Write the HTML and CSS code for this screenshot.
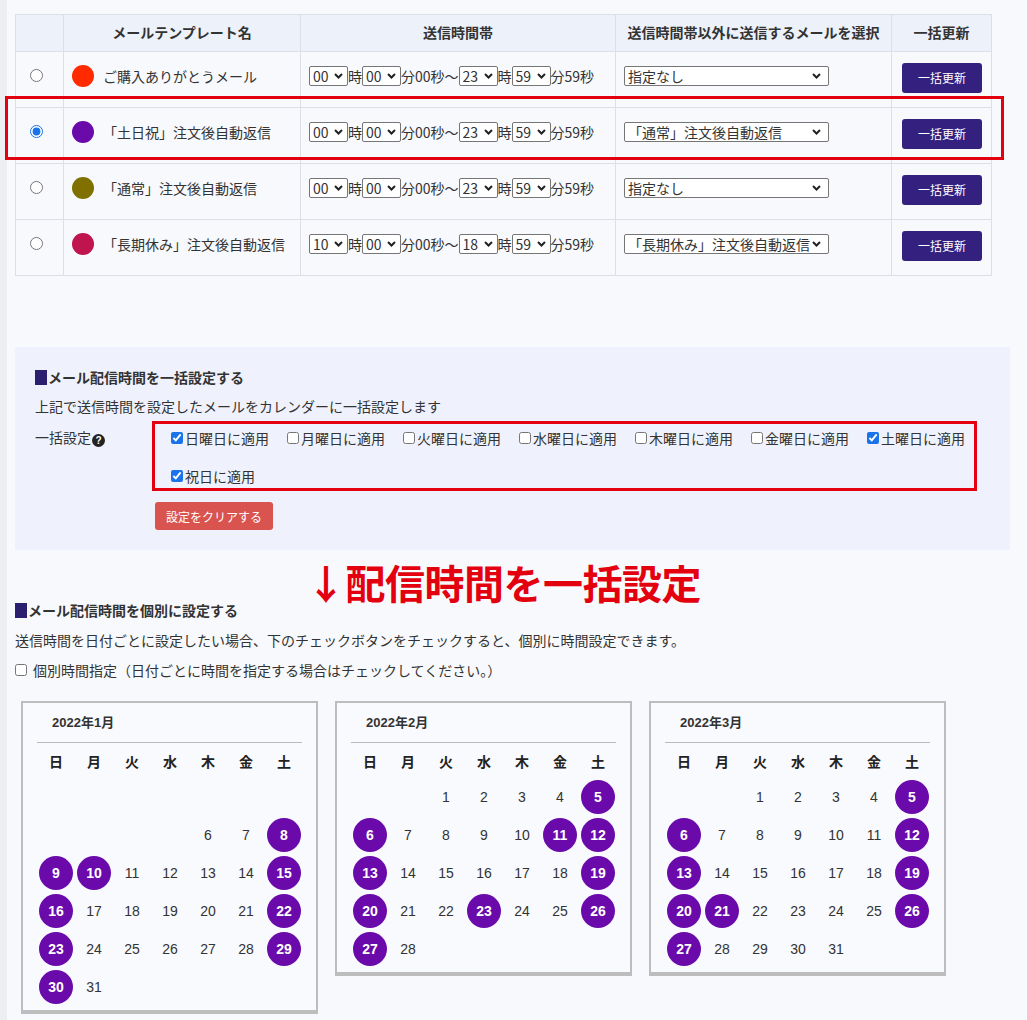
FILE: index.html
```html
<!DOCTYPE html>
<html lang="ja">
<head>
<meta charset="utf-8">
<title>メール配信時間設定</title>
<link rel="stylesheet" href="styles.css">
</head>
<body>
<div class="page">
  <div class="tbl-wrap">
    <table class="tpl">
      <thead>
        <tr>
          <th class="c-radio"></th>
          <th class="c-name">メールテンプレート名</th>
          <th class="c-time">送信時間帯</th>
          <th class="c-other">送信時間帯以外に送信するメールを選択</th>
          <th class="c-btn">一括更新</th>
        </tr>
      </thead>
      <tbody>
        <tr>
          <td class="c-radio"><input type="radio" name="tpl"></td>
          <td class="c-name"><div class="name"><span class="dot dot-red"></span>ご購入ありがとうメール</div></td>
          <td class="c-time"><div class="time">
            <span class="sel sm"><select><option>00</option></select><svg viewBox="0 0 9 6"><polyline points="1,1 4.5,4.5 8,1"/></svg></span>時<span class="sel sm"><select><option>00</option></select><svg viewBox="0 0 9 6"><polyline points="1,1 4.5,4.5 8,1"/></svg></span>分00秒〜<span class="sel sm"><select><option>23</option></select><svg viewBox="0 0 9 6"><polyline points="1,1 4.5,4.5 8,1"/></svg></span>時<span class="sel sm"><select><option>59</option></select><svg viewBox="0 0 9 6"><polyline points="1,1 4.5,4.5 8,1"/></svg></span>分59秒
          </div></td>
          <td class="c-other"><span class="sel lg"><select><option>指定なし</option></select><svg viewBox="0 0 9 6"><polyline points="1,1 4.5,4.5 8,1"/></svg></span></td>
          <td class="c-btn"><button class="btn-update">一括更新</button></td>
        </tr>
        <tr>
          <td class="c-radio"><input type="radio" name="tpl" checked></td>
          <td class="c-name"><div class="name"><span class="dot dot-purple"></span>「土日祝」注文後自動返信</div></td>
          <td class="c-time"><div class="time">
            <span class="sel sm"><select><option>00</option></select><svg viewBox="0 0 9 6"><polyline points="1,1 4.5,4.5 8,1"/></svg></span>時<span class="sel sm"><select><option>00</option></select><svg viewBox="0 0 9 6"><polyline points="1,1 4.5,4.5 8,1"/></svg></span>分00秒〜<span class="sel sm"><select><option>23</option></select><svg viewBox="0 0 9 6"><polyline points="1,1 4.5,4.5 8,1"/></svg></span>時<span class="sel sm"><select><option>59</option></select><svg viewBox="0 0 9 6"><polyline points="1,1 4.5,4.5 8,1"/></svg></span>分59秒
          </div></td>
          <td class="c-other"><span class="sel lg"><select><option>「通常」注文後自動返信</option></select><svg viewBox="0 0 9 6"><polyline points="1,1 4.5,4.5 8,1"/></svg></span></td>
          <td class="c-btn"><button class="btn-update">一括更新</button></td>
        </tr>
        <tr>
          <td class="c-radio"><input type="radio" name="tpl"></td>
          <td class="c-name"><div class="name"><span class="dot dot-olive"></span>「通常」注文後自動返信</div></td>
          <td class="c-time"><div class="time">
            <span class="sel sm"><select><option>00</option></select><svg viewBox="0 0 9 6"><polyline points="1,1 4.5,4.5 8,1"/></svg></span>時<span class="sel sm"><select><option>00</option></select><svg viewBox="0 0 9 6"><polyline points="1,1 4.5,4.5 8,1"/></svg></span>分00秒〜<span class="sel sm"><select><option>23</option></select><svg viewBox="0 0 9 6"><polyline points="1,1 4.5,4.5 8,1"/></svg></span>時<span class="sel sm"><select><option>59</option></select><svg viewBox="0 0 9 6"><polyline points="1,1 4.5,4.5 8,1"/></svg></span>分59秒
          </div></td>
          <td class="c-other"><span class="sel lg"><select><option>指定なし</option></select><svg viewBox="0 0 9 6"><polyline points="1,1 4.5,4.5 8,1"/></svg></span></td>
          <td class="c-btn"><button class="btn-update">一括更新</button></td>
        </tr>
        <tr>
          <td class="c-radio"><input type="radio" name="tpl"></td>
          <td class="c-name"><div class="name"><span class="dot dot-crimson"></span>「長期休み」注文後自動返信</div></td>
          <td class="c-time"><div class="time">
            <span class="sel sm"><select><option>10</option></select><svg viewBox="0 0 9 6"><polyline points="1,1 4.5,4.5 8,1"/></svg></span>時<span class="sel sm"><select><option>00</option></select><svg viewBox="0 0 9 6"><polyline points="1,1 4.5,4.5 8,1"/></svg></span>分00秒〜<span class="sel sm"><select><option>18</option></select><svg viewBox="0 0 9 6"><polyline points="1,1 4.5,4.5 8,1"/></svg></span>時<span class="sel sm"><select><option>59</option></select><svg viewBox="0 0 9 6"><polyline points="1,1 4.5,4.5 8,1"/></svg></span>分59秒
          </div></td>
          <td class="c-other"><span class="sel lg"><select><option>「長期休み」注文後自動返信</option></select><svg viewBox="0 0 9 6"><polyline points="1,1 4.5,4.5 8,1"/></svg></span></td>
          <td class="c-btn"><button class="btn-update">一括更新</button></td>
        </tr>
      </tbody>
    </table>
    <div class="row-mark"></div>
  </div>

  <section class="bulk">
    <h3 class="sec-title">メール配信時間を一括設定する</h3>
    <p class="desc">上記で送信時間を設定したメールをカレンダーに一括設定します</p>
    <div class="bulk-row">
      <div class="bulk-label">一括設定<span class="help">?</span></div>
      <div class="bulk-body">
        <div class="days">
          <label class="day"><input type="checkbox" checked>日曜日に適用</label>
          <label class="day"><input type="checkbox">月曜日に適用</label>
          <label class="day"><input type="checkbox">火曜日に適用</label>
          <label class="day"><input type="checkbox">水曜日に適用</label>
          <label class="day"><input type="checkbox">木曜日に適用</label>
          <label class="day"><input type="checkbox">金曜日に適用</label>
          <label class="day"><input type="checkbox" checked>土曜日に適用</label>
          <label class="day"><input type="checkbox" checked>祝日に適用</label>
        </div>
      </div>
    </div>
    <button class="btn-clear">設定をクリアする</button>
  </section>

  <div class="note">↓配信時間を一括設定</div>

  <section class="indiv">
    <h3 class="sec-title plain">メール配信時間を個別に設定する</h3>
    <p class="desc2">送信時間を日付ごとに設定したい場合、下のチェックボタンをチェックすると、個別に時間設定できます。</p>
    <label class="indiv-check"><input type="checkbox">個別時間指定（日付ごとに時間を指定する場合はチェックしてください。）</label>

    <div class="cals">
      <div class="cal">
        <div class="cal-title">2022年1月</div>
        <div class="grid">
          <span class="wd">日</span><span class="wd">月</span><span class="wd">火</span><span class="wd">水</span><span class="wd">木</span><span class="wd">金</span><span class="wd">土</span>
          <span></span><span></span><span></span><span></span><span></span><span></span><span></span>
          <span></span><span></span><span></span><span></span><span>6</span><span>7</span><span class="on">8</span>
          <span class="on">9</span><span class="on">10</span><span>11</span><span>12</span><span>13</span><span>14</span><span class="on">15</span>
          <span class="on">16</span><span>17</span><span>18</span><span>19</span><span>20</span><span>21</span><span class="on">22</span>
          <span class="on">23</span><span>24</span><span>25</span><span>26</span><span>27</span><span>28</span><span class="on">29</span>
          <span class="on">30</span><span>31</span>
        </div>
      </div>
      <div class="cal">
        <div class="cal-title">2022年2月</div>
        <div class="grid">
          <span class="wd">日</span><span class="wd">月</span><span class="wd">火</span><span class="wd">水</span><span class="wd">木</span><span class="wd">金</span><span class="wd">土</span>
          <span></span><span></span><span>1</span><span>2</span><span>3</span><span>4</span><span class="on">5</span>
          <span class="on">6</span><span>7</span><span>8</span><span>9</span><span>10</span><span class="on">11</span><span class="on">12</span>
          <span class="on">13</span><span>14</span><span>15</span><span>16</span><span>17</span><span>18</span><span class="on">19</span>
          <span class="on">20</span><span>21</span><span>22</span><span class="on">23</span><span>24</span><span>25</span><span class="on">26</span>
          <span class="on">27</span><span>28</span>
        </div>
      </div>
      <div class="cal">
        <div class="cal-title">2022年3月</div>
        <div class="grid">
          <span class="wd">日</span><span class="wd">月</span><span class="wd">火</span><span class="wd">水</span><span class="wd">木</span><span class="wd">金</span><span class="wd">土</span>
          <span></span><span></span><span>1</span><span>2</span><span>3</span><span>4</span><span class="on">5</span>
          <span class="on">6</span><span>7</span><span>8</span><span>9</span><span>10</span><span>11</span><span class="on">12</span>
          <span class="on">13</span><span>14</span><span>15</span><span>16</span><span>17</span><span>18</span><span class="on">19</span>
          <span class="on">20</span><span class="on">21</span><span>22</span><span>23</span><span>24</span><span>25</span><span class="on">26</span>
          <span class="on">27</span><span>28</span><span>29</span><span>30</span><span>31</span>
        </div>
      </div>
    </div>
  </section>
</div>
</body>
</html>
```

FILE: styles.css
```css
html, body {
  margin: 0;
  padding: 0;
}
body {
  background: linear-gradient(to right, #eceef2 0, #eceef2 7px, #f8f9fc 7px);
  font-family: "Noto Sans CJK JP", "Liberation Sans", sans-serif;
  font-size: 14px;
  color: #333;
}
.page {
  padding: 14px 0 0 15px;
  width: 996px;
}

/* ---------- template table ---------- */
.tbl-wrap {
  position: relative;
  width: 976px;
}
.tpl {
  border-collapse: collapse;
  width: 976px;
  table-layout: fixed;
  background: #f8f9fc;
}
.tpl th, .tpl td {
  border: 1px solid #dcdfe6;
  padding: 0;
}
.tpl th {
  height: 33px;
  padding-bottom: 3px;
  background: #edf1fa;
  font-weight: bold;
  font-size: 14px;
  text-align: center;
  line-height: 20px;
}
.tpl td {
  height: 47px;
  padding-bottom: 8px;
  vertical-align: middle;
}
.tpl .c-radio { width: 47px; }
.tpl .c-name { width: 236px; }
.tpl .c-time { width: 314px; }
.tpl .c-other { width: 275px; }
.tpl .c-btn { width: 99px; }

td.c-radio {
  padding-left: 14px;
  line-height: 0;
}
td.c-radio input {
  margin: 0;
  width: 13px;
  height: 13px;
  accent-color: #1a73e8;
}
.name {
  display: flex;
  align-items: center;
  gap: 9px;
  padding-left: 8px;
  white-space: nowrap;
}
.dot {
  width: 22px;
  height: 22px;
  border-radius: 50%;
  flex: none;
}
.dot-red { background: #ff2a00; }
.dot-purple { background: #6a0aab; }
.dot-olive { background: #7f7000; }
.dot-crimson { background: #c0144e; }

.time {
  display: flex;
  align-items: center;
  padding-left: 8px;
  white-space: nowrap;
}
.sel {
  position: relative;
  display: inline-block;
  height: 20px;
}
.sel select {
  appearance: none;
  -webkit-appearance: none;
  box-sizing: border-box;
  height: 20px;
  margin: 0;
  padding: 0 0 0 3px;
  border: 1px solid #767676;
  border-radius: 2px;
  background: #fff;
  font-family: "Noto Sans CJK JP", sans-serif;
  font-size: 14px;
  color: #333;
  line-height: 18px;
}
.sel svg {
  position: absolute;
  right: 5px;
  top: 7px;
  width: 9px;
  height: 6px;
  fill: none;
  stroke: #222;
  stroke-width: 2;
  pointer-events: none;
}
.sel.sm select { width: 39px; }
.sel.lg select { width: 205px; }
.sel.lg svg { right: 8px; }
td.c-other { padding-left: 8px; }

td.c-btn { text-align: center; }
.btn-update {
  width: 80px;
  height: 30px;
  border: 0;
  border-radius: 3px;
  background: #33207f;
  color: #fff;
  font-family: "Noto Sans CJK JP", sans-serif;
  font-size: 12px;
  padding: 0;
  margin: 4px 0 0 1px;
}

.row-mark {
  position: absolute;
  left: -10px;
  top: 82px;
  width: 999px;
  height: 64px;
  box-sizing: border-box;
  border: 3px solid #e3000f;
  pointer-events: none;
}

/* ---------- bulk section ---------- */
.bulk {
  margin-top: 71px;
  width: 995px;
  box-sizing: border-box;
  background: #eff2fc;
  padding: 20px 20px 20px 20px;
}
.sec-title {
  margin: 0;
  font-size: 14px;
  font-weight: bold;
  line-height: 20px;
  display: flex;
  align-items: center;
}
.sec-title::before {
  content: "";
  width: 12px;
  height: 15px;
  background: #2c1f70;
  margin-right: 1px;
  flex: none;
}
.desc {
  margin: 9px 0 0;
  line-height: 20px;
}
.bulk-row {
  display: flex;
  align-items: flex-start;
  margin-top: 5px;
}
.bulk-label {
  width: 117px;
  flex: none;
  padding-top: 6px;
  line-height: 20px;
}
.help {
  display: inline-block;
  vertical-align: -1px;
  width: 13px;
  height: 13px;
  border-radius: 50%;
  background: #222;
  color: #fff;
  text-align: center;
  font-family: "Liberation Sans", sans-serif;
  font-weight: bold;
  font-size: 10px;
  line-height: 13px;
  margin-left: 1px;
}
.bulk-body {
  width: 825px;
  height: 70px;
  box-sizing: border-box;
  border: 3px solid #e3000f;
  padding: 2px 0 0 16px;
}
.days {
  display: flex;
  flex-wrap: wrap;
  gap: 14px 18px;
}
.day {
  display: flex;
  align-items: center;
  height: 24px;
  white-space: nowrap;
}
.day input {
  margin: 0 2px 0 0;
  width: 12px;
  height: 12px;
  accent-color: #1a73e8;
}
.btn-clear {
  display: block;
  margin: 11px 0 0 120px;
  width: 118px;
  height: 28px;
  border: 0;
  border-radius: 3px;
  background: #d9534f;
  color: #fff;
  font-family: "Noto Sans CJK JP", sans-serif;
  font-size: 12px;
  padding: 0;
}

/* ---------- annotation ---------- */
.note {
  margin-top: 12px;
  padding-left: 291px;
  height: 40px;
  line-height: 40px;
  font-size: 40px;
  font-weight: bold;
  color: #e3000f;
  white-space: nowrap;
  letter-spacing: -0.5px;
}

/* ---------- individual section ---------- */
.indiv .sec-title {
  line-height: 16px;
}
.desc2 {
  margin: 12px 0 0;
  line-height: 20px;
}
.indiv-check {
  display: flex;
  align-items: center;
  margin-top: 10px;
  height: 20px;
  white-space: nowrap;
}
.indiv-check input {
  margin: 0 6px 0 0;
  width: 12px;
  height: 12px;
}

.cals {
  display: flex;
  align-items: flex-start;
  gap: 17px;
  margin: 21px 0 0 6px;
}
.cal {
  width: 297px;
  box-sizing: border-box;
  border: 2px solid #bdbdbd;
  border-bottom-width: 4px;
  padding: 0 14px 4px;
  background: #f9fafd;
}
.cal-title {
  height: 39px;
  line-height: 39px;
  padding-left: 15px;
  font-family: "Liberation Sans", "Noto Sans CJK JP", sans-serif;
  font-weight: bold;
  font-size: 13px;
  color: #333;
  border-bottom: 1px solid #bbb;
}
.grid {
  display: grid;
  grid-template-columns: repeat(7, 38px);
  grid-template-rows: 35px;
  grid-auto-rows: 38px;
}
.grid span {
  display: flex;
  align-items: center;
  justify-content: center;
  font-family: "Liberation Sans", sans-serif;
  font-size: 14px;
  color: #333;
}
.grid span.wd {
  font-family: "Noto Sans CJK JP", sans-serif;
  font-weight: bold;
  font-size: 14px;
  color: #222;
}
.grid span.on {
  width: 34px;
  height: 34px;
  margin: 2px;
  border-radius: 50%;
  background: #6a0aab;
  color: #fff;
  font-weight: bold;
}
```
